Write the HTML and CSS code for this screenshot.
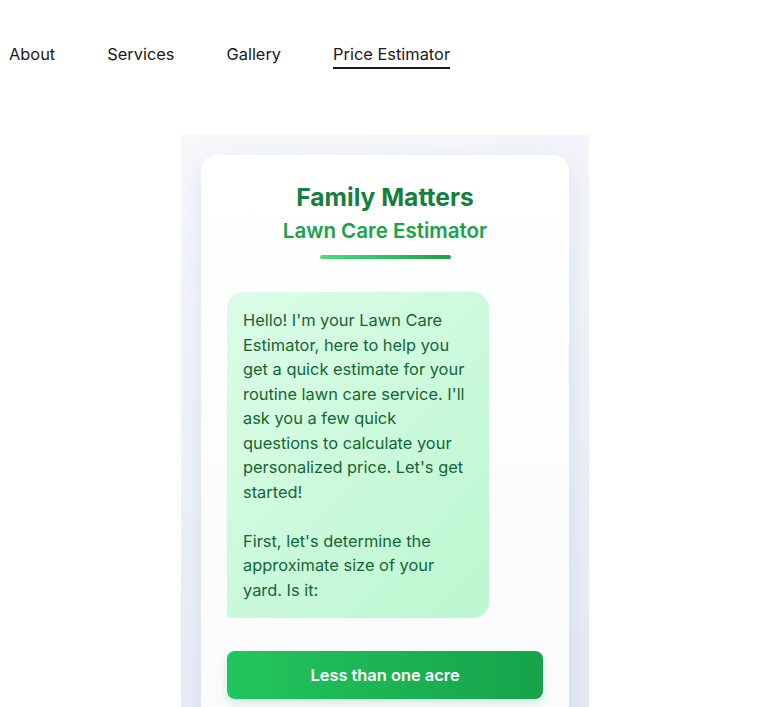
FILE: index.html
```html
<!DOCTYPE html>
<html lang="en">
<head>
<meta charset="utf-8">
<title>Price Estimator</title>
<link rel="stylesheet" href="styles.css">
</head>
<body>
<nav class="nav">
  <a class="nav-link" href="#">About</a>
  <a class="nav-link" href="#">Services</a>
  <a class="nav-link" href="#">Gallery</a>
  <a class="nav-link active" href="#">Price Estimator</a>
</nav>
<main class="panel">
  <section class="card">
    <header class="card-head">
      <h1 class="title">Family Matters</h1>
      <h2 class="subtitle">Lawn Care Estimator</h2>
      <div class="bar"></div>
    </header>
    <div class="chat">
      <div class="bubble">Hello! I'm your Lawn Care Estimator, here to help you get a quick estimate for your routine lawn care service. I'll ask you a few quick questions to calculate your personalized price. Let's get started!<br><br>First, let's determine the approximate size of your yard. Is it:</div>
    </div>
    <div class="options">
      <button class="option">Less than one acre</button>
    </div>
  </section>
</main>
</body>
</html>
```
FILE: styles.css
```css
* { box-sizing: border-box; }
html, body { margin: 0; padding: 0; }
body {
  font-family: Inter, "Noto Sans", "Liberation Sans", sans-serif;
  background: #ffffff;
  color: #111111;
}
.nav {
  display: flex;
  gap: 52px;
  padding: 43px 9px 0;
  height: 135px;
}
.nav-link {
  font-size: 16.4px;
  line-height: 22px;
  color: #1a1a1a;
  text-decoration: none;
  height: 26px;
  border-bottom: 2px solid transparent;
}
.nav-link.active {
  border-bottom-color: #1a1a1a;
}
.panel {
  margin-left: 181px;
  width: 408px;
  padding: 20px;
  min-height: 900px;
  background: linear-gradient(160deg, #f6f8fb 0%, #dce3f1 100%);
}
.card {
  background: linear-gradient(180deg, #ffffff 0%, #f8f9fd 100%);
  border-radius: 16px;
  box-shadow: 0 8px 24px rgba(90, 110, 150, 0.12);
  padding: 26px 26px 40px;
  min-height: 800px;
}
.card-head {
  display: flex;
  flex-direction: column;
  align-items: center;
}
.title {
  margin: 0;
  font-size: 24.6px;
  line-height: 32px;
  font-weight: 700;
  color: #15803d;
}
.subtitle {
  margin: 3px 0 0;
  font-size: 20.5px;
  line-height: 30px;
  font-weight: 600;
  color: #16a34a;
}
.bar {
  margin-top: 9px;
  width: 131px;
  height: 4px;
  border-radius: 2px;
  background: linear-gradient(90deg, #4ade80, #16a34a);
}
.chat {
  margin-top: 33px;
  display: flex;
}
.bubble {
  width: 262px;
  padding: 16px;
  font-size: 16.4px;
  line-height: 24.5px;
  color: #166534;
  background: linear-gradient(135deg, #dcfce7 0%, #bbf7d0 100%);
  border-radius: 16px 16px 16px 4px;
}
.options {
  margin-top: 33px;
  display: flex;
  flex-direction: column;
  gap: 12px;
}
.option {
  height: 48px;
  border: none;
  border-radius: 8px;
  font-family: inherit;
  font-size: 16.4px;
  font-weight: 600;
  color: #ffffff;
  background: linear-gradient(90deg, #22c55e 0%, #16a34a 100%);
  box-shadow: 0 4px 8px rgba(22, 163, 74, 0.18);
}
```
